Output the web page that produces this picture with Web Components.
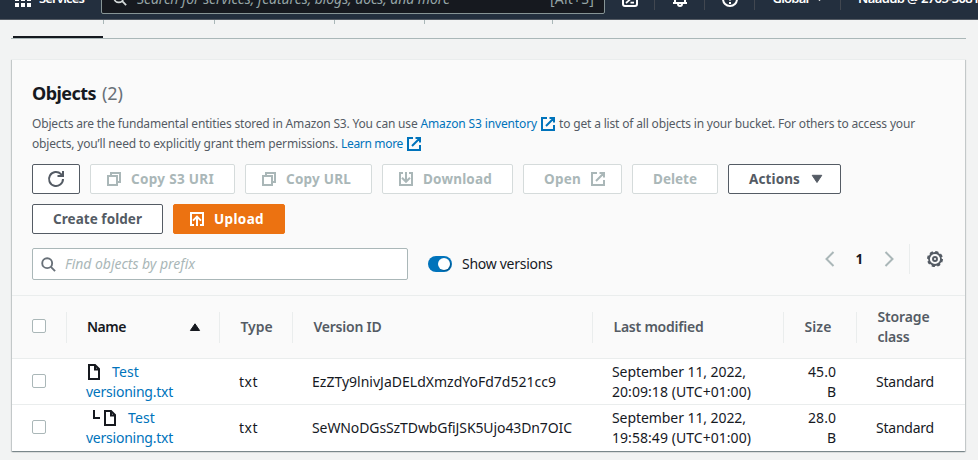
<!DOCTYPE html>
<html lang="en">
<head>
<meta charset="utf-8">
<title>S3 bucket objects</title>
<style>
html,body{margin:0;height:460px;overflow:hidden}
body{background:#f2f3f3;font:14px/20px "Noto Sans","Open Sans",sans-serif;color:#16191f}
</style>
</head>
<body>
<s3-page></s3-page>
<script>
const define = (name, html, setup) => customElements.define(name, class extends HTMLElement {
  connectedCallback() {
    if (this.shadowRoot) return;
    const t = document.createElement('template');
    t.innerHTML = html;
    this.attachShadow({mode: 'open'}).append(t.content.cloneNode(true));
    if (setup) setup(this, this.shadowRoot);
  }
});

const ICONS = {
  external: '<path d="M7 2H2v12h12V9M9.5 2H14v4.5M14 2L6 10"/>',
  copy: '<path d="M2 5h9v9H2zM5 5V2h9v9h-3"/>',
  download: '<path d="M5 2H2v12h12V2h-3M8 1v9.5M4 6.8l4 4 4-4"/>',
  upload: '<path d="M5 14H2V2h12v12h-3M8 15V6M4 9.6l4-4 4 4"/>',
  refresh: '<path d="M15 8a7 7 0 1 1-2-4.9L14.5 5M9.5 5H15V0"/>',
  down: '<path d="M3.2 4.3h9.6L8 11.5z" fill="currentColor" stroke-width="1"/>',
  up: '<path d="M3.4 11.5h9.2L8 4.8z" fill="currentColor" stroke-width="1"/>',
  search: '<circle cx="6.6" cy="6.6" r="5.3"/><path d="M10.5 10.5L15 15"/>',
  file: '<path d="M3 1h6l4 4v10H3zM9 1v4.500h4"/>',
  left: '<path d="M11.5 1L4.5 8l7 7"/>',
  right: '<path d="M4.500 1l7 7-7 7"/>',
  branch: '<path d="M1 0v8h6"/>',
  gear: '<circle cx="8" cy="8" r="6" stroke-width="1.800"/><circle cx="8" cy="8" r="7" stroke-dasharray="3.200 2.298"/><circle cx="8" cy="8" r="2" stroke-width="1.900"/>',
  grid: '<path d="M0 2h4M6 2h4M12 2h4M0 8h4M6 8h4M12 8h4M0 14h4M6 14h4M12 14h4" stroke-width="4"/>',
  shell: '<rect x="1" y="1" width="14" height="14" rx="2"/><path d="M4 5l4 3.500L4 12M8.500 11.700H12" stroke-width="1.700"/>',
  bell: '<path d="M1 12h14M3 12V7a5 5 0 0 1 10 0v5M6 12.500v.5a2 2 0 0 0 4 0v-.5"/>',
  help: '<circle cx="8" cy="8" r="7"/><path d="M5.800 6a2.200 2.200 0 1 1 3.400 1.800Q8 8.500 8 9.500M8 11v2"/>'
};
define('ui-icon', `<style>:host{display:inline-block;width:16px;height:16px;flex:none}svg{display:block;width:100%;height:100%;overflow:visible}</style>
<svg viewBox="0 0 16 16" fill="none" stroke="currentColor" stroke-width="2"></svg>`,
  (el, r) => { r.querySelector('svg').innerHTML = ICONS[el.getAttribute('name')]; });

/* A single line of text tracked so that it fills the width given in "w". */
define('ui-text', `<style>:host{display:inline-block;white-space:pre}</style><span><slot></slot></span>`, (el, r) => {
  const w = +el.getAttribute('w'), s = r.querySelector('span');
  if (w) {
    const d = (w - s.getBoundingClientRect().width) / el.textContent.length;
    s.style.letterSpacing = d.toFixed(3) + 'px';
    el.style.width = w + 'px';
  }
});

define('ui-button', `<style>
:host{display:flex;box-sizing:border-box;height:30px;align-items:center;justify-content:center;border:1px solid #545b64;border-radius:2px;background:#fff;color:#545b64;font-weight:700;font-size:13.5px}
:host([disabled]){border-color:#d5dbdb;color:#aab7b8}
:host([primary]){background:#ec7211;border-color:#ec7211;color:#fff}
:host([icon=start]){padding-right:5px}
:host([icon=end]){padding-left:5px}
</style><slot></slot>`);

define('ui-check', `<style>:host{display:block;box-sizing:border-box;width:14px;height:14px;border:1px solid #aab7b8;border-radius:2px;background:#fff;margin:0 0 2px 20px}</style>`);

define('ui-toggle', `<style>:host{display:flex;box-sizing:border-box;width:24px;height:16px;border-radius:8px;background:#0073bb;padding:2px;justify-content:flex-end}
i{width:12px;height:12px;border-radius:50%;background:#fff;box-shadow:1px 1px 1px #00000040}</style><i></i>`);

define('top-nav', `<style>
:host{display:block;height:19px;overflow:hidden;background:#232f3e;border-bottom:1px solid #545b64;color:#fff;font-size:13px}
.row{display:flex;align-items:center;height:42px;margin-top:-22px;width:1000px}
.search{box-sizing:border-box;display:flex;align-items:center;width:504px;height:30px;border:1px solid #879596;border-radius:2px;background:#16191f;color:#95a5a6;margin-left:17px;padding:0 10px 0 11px;font-size:14px}
.search ui-icon{color:#d5dbdb;margin-right:10px}
em{margin-right:auto}
.menu{font-weight:600;margin-bottom:2px}
.cell{box-sizing:border-box;height:22px;border-right:1px solid #414750;display:flex;align-items:center;justify-content:center;width:50px}
</style><div class="row">
<ui-icon name="grid" style="margin-left:15px"></ui-icon><ui-text class="menu" w="45" style="margin-left:8px">Services</ui-text>
<div class="search"><ui-icon name="search" style="width:14px;height:14px"></ui-icon><em><ui-text w="313">Search for services, features, blogs, docs, and more</ui-text></em><ui-text w="44">[Alt+S]</ui-text></div>
<div class="cell"><ui-icon name="shell"></ui-icon></div><div class="cell"><ui-icon name="bell"></ui-icon></div><div class="cell"><ui-icon name="help"></ui-icon></div>
<div class="cell" style="width:86px"><ui-text class="menu" w="36">Global</ui-text><ui-icon name="down" style="width:7px;height:7px;margin-left:7px"></ui-icon></div>
<ui-text class="menu" w="121" style="margin-left:17px">Naadub @ 2765-3081</ui-text>
</div>`);

define('tab-strip', `<style>
:host{display:flex;height:18px;border-bottom:1px solid #aab7b8;margin:0 12px 0 11px}
i{box-sizing:border-box;height:4px;border-right:1px solid #aab7b8}
i.active{height:18px;margin-left:2px;border-right:0;border-bottom:2px solid #16191f;width:90px}
</style><i class="active"></i><i style="width:1px"></i><i style="width:111px"></i><i style="width:120px"></i><i style="width:90px"></i><i style="width:128px"></i>`);

define('panel-header', `<style>
:host{display:block;height:236px;box-sizing:border-box;padding:22px 20px 0 20px;border-bottom:1px solid #eaeded}
.title{display:flex;gap:6px;font-size:18px;line-height:22px;color:#687078}
b{color:#16191f}
.desc{margin-top:10px;font-size:12px;line-height:20px;color:#545b64}
.line{display:flex;height:20px;align-items:center}
a{color:#0073bb;display:flex;align-items:center}
.line ui-icon{margin:0 3px 0 3px}
.buttons{display:flex;flex-wrap:wrap;gap:10px;margin-top:10px;width:880px}
.filter{display:flex;align-items:center;height:32px;margin-top:14px}
.input{box-sizing:border-box;width:376px;height:32px;border:1px solid #aab7b8;border-radius:2px;background:#fff;display:flex;align-items:center;padding-left:8px;color:#aab7b8;font-style:italic}
.input ui-icon{color:#687078;margin-right:9px;width:15px;height:15px}
.pages{display:flex;align-items:center;margin-left:auto;margin-top:-11px;color:#aab7b8;height:30px}
.pages b{font-size:13.5px;margin:0 17.5px 0 18px;width:8px}
.pref{height:30px;border-left:1px solid #eaeded;margin-left:12px;padding-left:17px;display:flex;align-items:center;color:#545b64;margin-right:2px}
</style>
<div class="title"><b><ui-text w="64">Objects</ui-text></b><ui-text w="21">(2)</ui-text></div>
<div class="desc">
<div class="line"><ui-text w="388.500">Objects are the fundamental entities stored in Amazon S3. You can use </ui-text><a><ui-text w="116.500">Amazon S3 inventory</ui-text><ui-icon name="external"></ui-icon></a><ui-text w="356">to get a list of all objects in your bucket. For others to access your</ui-text></div>
<div class="line"><ui-text w="309">objects, you’ll need to explicitly grant them permissions. </ui-text><a><ui-text w="62">Learn more</ui-text><ui-icon name="external"></ui-icon></a></div>
</div>
<div class="buttons">
<ui-button style="width:48px"><ui-icon name="refresh"></ui-icon></ui-button>
<ui-button disabled icon="start" style="width:145px"><ui-icon name="copy" style="margin-right:9px"></ui-icon><ui-text w="83">Copy S3 URI</ui-text></ui-button>
<ui-button disabled icon="start" style="width:127px"><ui-icon name="copy" style="margin-right:9px"></ui-icon><ui-text w="65">Copy URL</ui-text></ui-button>
<ui-button disabled icon="start" style="width:131px"><ui-icon name="download" style="margin-right:9px"></ui-icon><ui-text w="69">Download</ui-text></ui-button>
<ui-button disabled icon="end" style="width:99px"><ui-text w="37">Open</ui-text><ui-icon name="external" style="margin-left:9px"></ui-icon></ui-button>
<ui-button disabled style="width:86px"><ui-text w="44">Delete</ui-text></ui-button>
<ui-button icon="end" style="width:113px"><ui-text w="51">Actions</ui-text><ui-icon name="down" style="margin-left:9px"></ui-icon></ui-button>
<ui-button style="width:131px"><ui-text w="89">Create folder</ui-text></ui-button>
<ui-button primary icon="start" style="width:112px"><ui-icon name="upload" style="margin-right:9px"></ui-icon><ui-text w="50">Upload</ui-text></ui-button>
</div>
<div class="filter"><div class="input"><ui-icon name="search"></ui-icon><ui-text w="130">Find objects by prefix</ui-text></div>
<ui-toggle style="margin:0 10px 0 20px"></ui-toggle><ui-text w="90.500">Show versions</ui-text>
<div class="pages"><ui-icon name="left"></ui-icon><b>1</b><ui-icon name="right"></ui-icon><div class="pref"><ui-icon name="gear"></ui-icon></div></div></div>`);

define('table-row', `<style>
:host{display:grid;grid-template-columns:55px 153px 73px 300px 191px 73px 108px;align-items:center;height:45px;background:#fff;border-bottom:1px solid #eaeded}
:host([head]){height:62px;background:#fafafa;color:#545b64;font-weight:600}
:host([last]){border-bottom:0;height:46px;align-items:start;box-sizing:border-box;padding-top:3px}
:host([last]) ::slotted(*){align-self:center}
:host([last]){padding:0 0 1px}
</style><slot></slot>`);

define('table-cell', `<style>
:host{display:block;padding-left:19px}
div{display:flex;flex-direction:column}
:host([right]) div{align-items:flex-end;padding-right:21px}
:host([head]){padding-left:20.500px;margin-left:-1px;box-sizing:border-box;height:31px;border-left:1px solid #eaeded;display:flex;align-items:center}
:host([head]) div{flex:1}
:host([dark]){color:#16191f;padding-left:20px}
</style><div><slot></slot></div>`);

define('name-cell', `<style>
:host{display:block;padding-left:19px}
.first{display:flex;height:20px;color:#16191f}
.first ui-text{margin-left:10px}
ui-text{color:#0073bb;display:block}
ui-icon{margin-top:2px}
ui-icon[name=branch]{margin-left:7px;margin-right:-7px}
</style><div class="first"><ui-icon name="branch"></ui-icon><ui-icon name="file"></ui-icon><ui-text w="27">Test</ui-text></div><ui-text w="87">versioning.txt</ui-text>`,
  (el, r) => { if (!el.hasAttribute('child')) r.querySelector('[name=branch]').remove(); });

const row = (last, id, idw, time, size) => `<table-row ${last ? 'last' : ''}><ui-check></ui-check><name-cell ${last ? 'child' : ''}></name-cell>
<table-cell><ui-text w="19">txt</ui-text></table-cell><table-cell><ui-text w="${idw}">${id}</ui-text></table-cell>
<table-cell><ui-text w="134">September 11, 2022,</ui-text><ui-text w="139">${time} (UTC+01:00)</ui-text></table-cell>
<table-cell right><ui-text w="28">${size}</ui-text><ui-text>B</ui-text></table-cell>
<table-cell><ui-text w="58">Standard</ui-text></table-cell></table-row>`;

define('s3-page', `<style>
:host{display:block}
main{margin:20px 13px 0 12px;border-top:1px solid #eaeded;background:#fafafa;box-shadow:0 1px 1px 0 rgba(0,28,36,.3),1px 1px 1px 0 rgba(0,28,36,.15),-1px 1px 1px 0 rgba(0,28,36,.15)}
.name{display:flex;align-items:center;justify-content:space-between;padding-right:17px}
</style>
<top-nav></top-nav><tab-strip></tab-strip>
<main><panel-header></panel-header>
<table-row head><ui-check></ui-check>
<table-cell head dark><div class="name"><ui-text w="39">Name</ui-text><ui-icon name="up"></ui-icon></div></table-cell>
<table-cell head><ui-text w="32">Type</ui-text></table-cell>
<table-cell head><ui-text w="68">Version ID</ui-text></table-cell>
<table-cell head><ui-text w="90">Last modified</ui-text></table-cell>
<table-cell head><ui-text w="27">Size</ui-text></table-cell>
<table-cell head><ui-text w="52">Storage</ui-text><ui-text w="32">class</ui-text></table-cell></table-row>
${row(false, 'EzZTy9lnivJaDELdXmzdYoFd7d521cc9', 244, '20:09:18', '45.0')}
${row(true, 'SeWNoDGsSzTDwbGfiJSK5Ujo43Dn7OIC', 260, '19:58:49', '28.0')}
</main>`);
</script>
</body>
</html>
